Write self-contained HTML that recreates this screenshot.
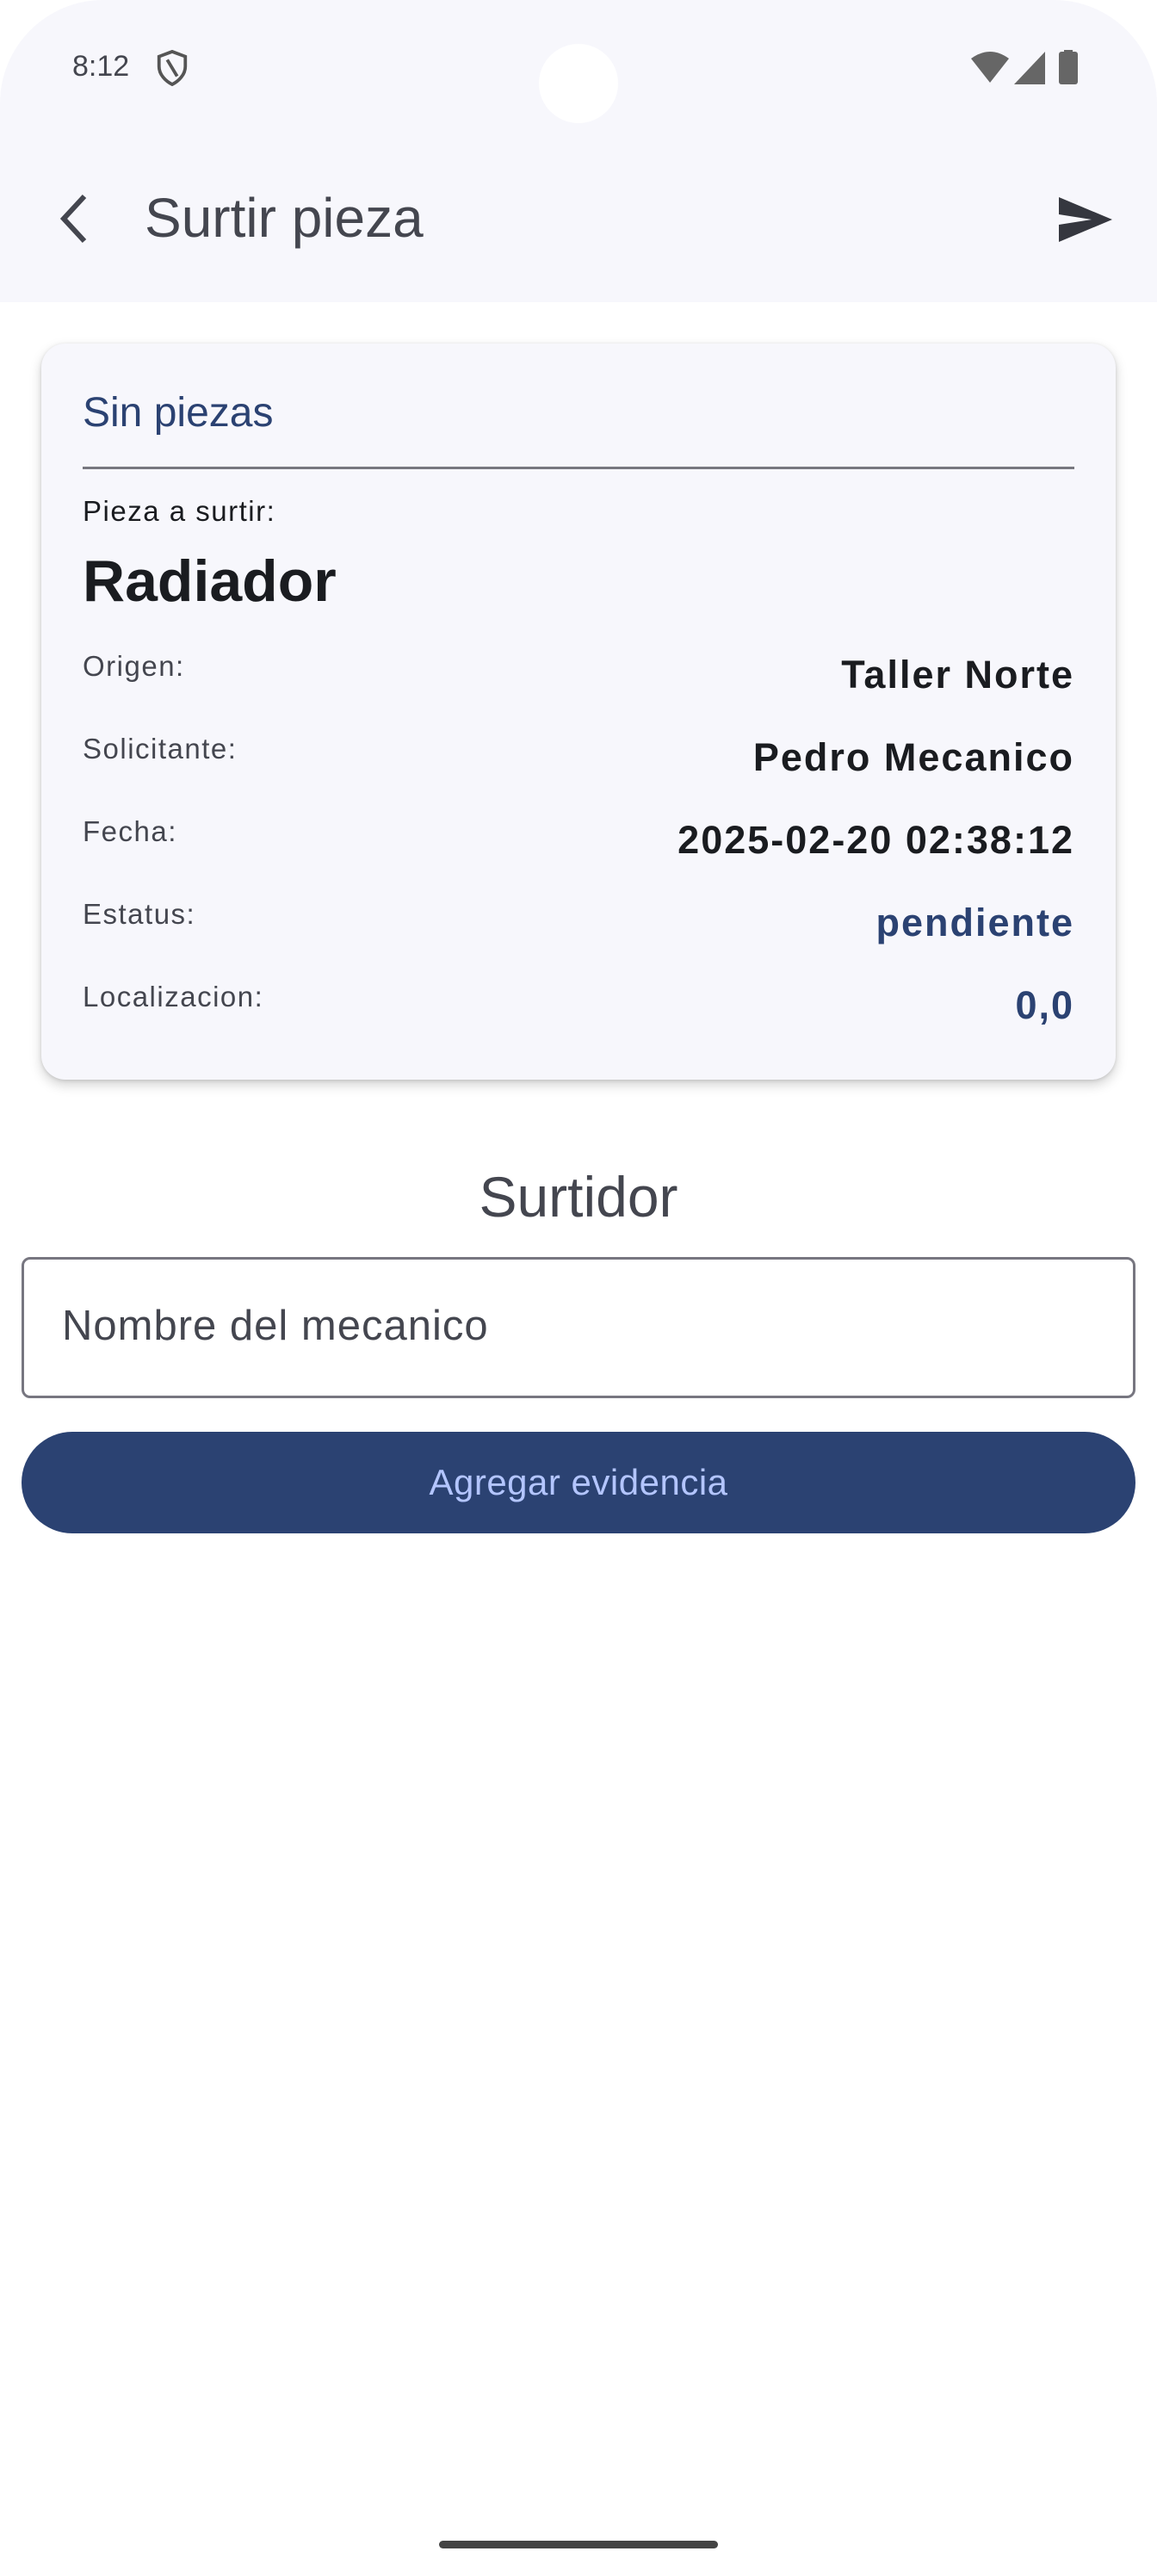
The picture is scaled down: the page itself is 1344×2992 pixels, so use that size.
<!DOCTYPE html>
<html><head><meta charset="utf-8"><style>
*{margin:0;padding:0;box-sizing:border-box}
body{width:1344px;height:2992px;background:#fff;font-family:"Liberation Sans",sans-serif;position:relative;overflow:hidden}
.abs{position:absolute;white-space:nowrap}
.frame{position:absolute;left:0;top:0;width:1344px;height:2992px;border-radius:120px;overflow:hidden;background:#fff}
.bar{position:absolute;left:0;top:0;width:1344px;height:351px;background:#f7f7fc}
.card{position:absolute;left:48px;top:399px;width:1248px;height:855px;background:#f7f7fc;border-radius:28px;box-shadow:0 6px 14px rgba(0,0,0,.18),0 1px 4px rgba(0,0,0,.12)}
.lbl{font-size:33px;color:#44464f;letter-spacing:1.5px}
.val{font-size:45px;font-weight:bold;color:#1a1c20;letter-spacing:2px;right:96px}
.blue{color:#2b4272}
</style></head><body>
<div class="frame">
<div class="bar"></div>
<div class="abs" style="left:84px;top:58px;font-size:34px;color:#44464f">8:12</div>
<svg class="abs" style="left:180px;top:58px" width="40" height="42" viewBox="0 0 20 22"><path d="M10 1 L18 4 V10 C18 15 14 19 10 21 C6 19 2 15 2 10 V4 Z" fill="none" stroke="#555" stroke-width="2"/><path d="M7 6 L13 16" stroke="#555" stroke-width="2"/></svg>
<div class="abs" style="left:626px;top:51px;width:92px;height:92px;border-radius:50%;background:#fff"></div>
<svg class="abs" style="left:1126px;top:58px" width="140" height="42" viewBox="0 0 140 42"><path d="M2 10 Q24 -6 46 10 L24 38 Z" fill="#666"/><path d="M52 40 L88 2 V40 Z" fill="#666"/><rect x="104" y="2" width="22" height="38" rx="3" fill="#666"/><rect x="110" y="0" width="10" height="4" fill="#666"/></svg>
<svg class="abs" style="left:62px;top:224px" width="44" height="60" viewBox="0 0 44 60"><path d="M36 4 L12 30 L36 56" fill="none" stroke="#44464f" stroke-width="6"/></svg>
<div class="abs" style="left:168px;top:216px;font-size:64px;color:#44464f">Surtir pieza</div>
<svg class="abs" style="left:1228px;top:227px" width="66" height="56" viewBox="0 0 66 56"><path d="M2 2 L64 28 L2 54 L2 34 L40 28 L2 22 Z" fill="#35373f"/></svg>

<div class="card"></div>
<div class="abs" style="left:96px;top:452px;font-size:48px;color:#2b4272">Sin piezas</div>
<div class="abs" style="left:96px;top:542px;width:1152px;height:3px;background:#77777f"></div>
<div class="abs" style="left:96px;top:575px;font-size:33px;color:#1a1c20;letter-spacing:1.5px">Pieza a surtir:</div>
<div class="abs" style="left:96px;top:636px;font-size:68px;font-weight:bold;color:#1a1c20">Radiador</div>
<div class="abs lbl" style="left:96px;top:755px">Origen:</div>
<div class="abs val" style="top:758px">Taller Norte</div>
<div class="abs lbl" style="left:96px;top:851px">Solicitante:</div>
<div class="abs val" style="top:854px">Pedro Mecanico</div>
<div class="abs lbl" style="left:96px;top:947px">Fecha:</div>
<div class="abs val" style="top:950px">2025-02-20 02:38:12</div>
<div class="abs lbl" style="left:96px;top:1043px">Estatus:</div>
<div class="abs val blue" style="top:1046px">pendiente</div>
<div class="abs lbl" style="left:96px;top:1139px">Localizacion:</div>
<div class="abs val blue" style="top:1142px">0,0</div>

<div class="abs" style="left:0;width:1344px;text-align:center;top:1352px;font-size:66px;color:#44464f">Surtidor</div>
<div class="abs" style="left:25px;top:1460px;width:1294px;height:164px;border:3px solid #777680;border-radius:10px"></div>
<div class="abs" style="left:72px;top:1512px;font-size:49px;color:#44464f;letter-spacing:1px">Nombre del mecanico</div>
<div class="abs" style="left:25px;top:1663px;width:1294px;height:118px;border-radius:59px;background:#2b4272;color:#b3c5ff;font-size:42px;letter-spacing:0.5px;text-align:center;line-height:118px">Agregar evidencia</div>
<div class="abs" style="left:510px;top:2951px;width:324px;height:9px;border-radius:5px;background:#444"></div>
</div>
</body></html>
